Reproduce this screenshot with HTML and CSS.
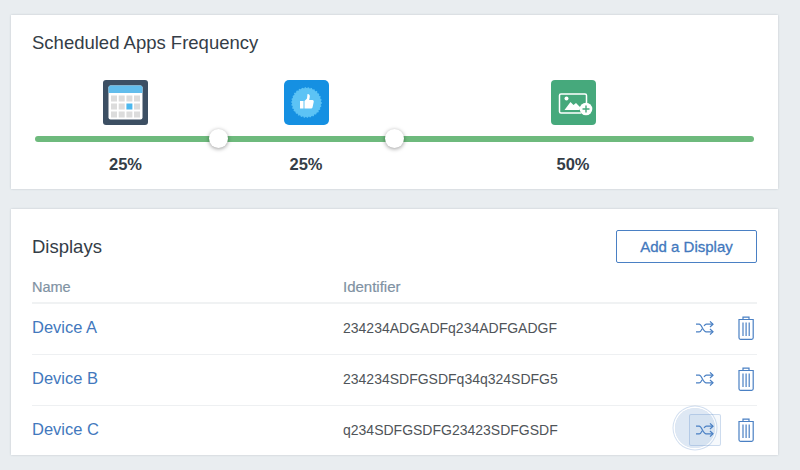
FILE: index.html
```html
<!DOCTYPE html>
<html lang="en">
<head>
<meta charset="utf-8">
<title>Scheduled Apps</title>
<link rel="stylesheet" href="styles.css">
</head>
<body>
<svg class="defs" width="0" height="0" aria-hidden="true">
  <symbol id="shuffle" viewBox="0 0 18 14">
    <g fill="none" stroke="currentColor" stroke-width="1.2">
      <path d="M0 3.200h3.200c2.800 0 3.600 7.600 7 7.600H17"/>
      <path d="M0 10.800h3.200c1.300 0 2.200-1.500 3-3.100M8 5c.7-1 1.400-1.800 2.400-1.800H17"/>
      <path d="M14 .4l3 2.800-3 2.800M14 8l3 2.800-3 2.800"/>
    </g>
  </symbol>
  <symbol id="trash" viewBox="0 0 16 24">
    <g fill="none" stroke="currentColor" stroke-width="1.200">
      <path d="M1 3.500h14.200v18.300a1.500 1.500 0 0 1-1.500 1.500H2.500A1.500 1.500 0 0 1 1 21.800z"/>
      <path d="M5 3.300V1.200h6v2.100"/>
      <path d="M5 6.500v13.500M8.100 6.500v13.500M11.200 6.500v13.500"/>
    </g>
  </symbol>
</svg>

<main class="page">
  <section class="card freq">
    <h2 class="title">Scheduled Apps Frequency</h2>
    <div class="slider">
      <div class="col col-a">
        <svg class="app" viewBox="0 0 45 45">
          <rect width="45" height="45" rx="3" fill="#3c4f63"/>
          <rect x="5.500" y="5.500" width="34" height="34" rx="2" fill="#fff"/>
          <path d="M5.500 13V7.500a2 2 0 0 1 2-2h30a2 2 0 0 1 2 2V13z" fill="#62bdec"/>
          <g fill="#dcdcdc">
            <rect x="8" y="15.500" width="6" height="6"/><rect x="15.700" y="15.500" width="6" height="6"/><rect x="23.400" y="15.500" width="6" height="6"/><rect x="31" y="15.500" width="6" height="6"/>
            <rect x="8" y="23.500" width="6" height="6"/><rect x="15.700" y="23.500" width="6" height="6"/><rect x="31" y="23.500" width="6" height="6"/>
            <rect x="8" y="31.500" width="6" height="6"/><rect x="15.700" y="31.500" width="6" height="6"/><rect x="23.400" y="31.500" width="6" height="6"/><rect x="31" y="31.500" width="6" height="6"/>
          </g>
          <rect x="23.400" y="23.500" width="6" height="6" fill="#4db8ee"/>
        </svg>
        <div class="track"></div>
        <div class="pct">25%</div>
      </div>
      <div class="col col-b">
        <svg class="app" viewBox="0 0 45 45">
          <rect width="45" height="45" rx="5" fill="#1590e2"/>
          <circle cx="22.500" cy="22.500" r="14.500" fill="#5cc3f5" stroke="#5cc3f5" stroke-width="1.500" stroke-dasharray="1.500 1.500"/>
          <path d="M16 21h3.500v7.500H16zM20.500 21l2.500-2.500.5-4.500c2 0 2.700 1.500 2.200 3.500l-.5 2.500h3.300c1 0 1.500 1 1.200 2l-1.200 5.500c-.2.700-.7 1-1.300 1h-6.700z" fill="#fff"/>
        </svg>
        <div class="track"></div>
        <div class="pct">25%</div>
      </div>
      <div class="col col-c">
        <svg class="app" viewBox="0 0 45 45">
          <rect width="45" height="45" rx="4" fill="#46a97c"/>
          <path d="M30 33H10a1.500 1.500 0 0 1-1.500-1.500V15.500A1.500 1.500 0 0 1 10 14h24a1.500 1.500 0 0 1 1.500 1.500V23" fill="none" stroke="#fff" stroke-width="1.500"/>
          <circle cx="15.500" cy="18.500" r="2" fill="#fff"/>
          <path d="M13.500 30l6-8 3 3 2.500-2 4.500 4.500-1 2.500z" fill="#fff"/>
          <circle cx="35" cy="29" r="6.300" fill="#fff"/>
          <path d="M35 25.500v7M31.500 29h7" stroke="#46a97c" stroke-width="1.400"/>
        </svg>
        <div class="track"></div>
        <div class="pct">50%</div>
      </div>
      <span class="thumb thumb-1"></span>
      <span class="thumb thumb-2"></span>
    </div>
  </section>

  <section class="card displays">
    <header class="head">
      <h2 class="title">Displays</h2>
      <button class="add" type="button">Add a Display</button>
    </header>
    <div class="row row-head">
      <span class="name">Name</span>
      <span class="ident">Identifier</span>
    </div>
    <div class="row">
      <a class="name link">Device A</a>
      <span class="ident val">234234ADGADFq234ADFGADGF</span>
      <span class="acts">
        <svg class="shuffle"><use href="#shuffle"/></svg>
        <svg class="trash"><use href="#trash"/></svg>
      </span>
    </div>
    <div class="row">
      <a class="name link">Device B</a>
      <span class="ident val">234234SDFGSDFq34q324SDFG5</span>
      <span class="acts">
        <svg class="shuffle"><use href="#shuffle"/></svg>
        <svg class="trash"><use href="#trash"/></svg>
      </span>
    </div>
    <div class="row">
      <a class="name link">Device C</a>
      <span class="ident val">q234SDFGSDFG23423SDFGSDF</span>
      <span class="acts">
        <span class="shuffle-wrap">
          <span class="ripple"></span>
          <span class="press"></span>
          <svg class="shuffle"><use href="#shuffle"/></svg>
        </span>
        <svg class="trash"><use href="#trash"/></svg>
      </span>
    </div>
  </section>
</main>
</body>
</html>
```

FILE: styles.css
```css
* { box-sizing: border-box; }
html, body { margin: 0; height: 100%; }
body {
  background: #e9edf0;
  font-family: "Liberation Sans", Arial, sans-serif;
  color: #343d47;
  overflow: hidden;
}
.defs { position: absolute; }
.page {
  width: 767px;
  margin-left: 11px;
  padding-top: 15px;
  display: flex;
  flex-direction: column;
  gap: 20px;
}
.card {
  background: #fff;
  box-shadow: 0 0 2px rgba(90, 105, 120, .28);
}
.title {
  margin: 0;
  font-size: 18.500px;
  font-weight: 400;
  line-height: 24px;
}
.freq { height: 174px; padding: 16px 24px 0 21px; }
.slider {
  position: relative;
  display: flex;
  width: 719px;
  margin: 25px 0 0 3px;
}
.col {
  display: flex;
  flex-direction: column;
  align-items: center;
}
.col-a { width: 183px; }
.col-b { width: 176px; }
.col-c { width: 360px; }
.app { display: block; width: 45px; height: 45px; }
.col-a .app { margin-right: 3px; }
.col-c .app { margin-right: 2px; }
.track { width: 100%; height: 6px; margin-top: 11px; background: #6eba7d; }
.col-a .track { border-radius: 3px 0 0 3px; }
.col-c .track { border-radius: 0 3px 3px 0; }
.pct {
  margin-top: 13px;
  font-size: 16.500px;
  font-weight: 700;
  line-height: 18px;
  color: #343d47;
}
.col-a .pct { margin-right: 2px; }
.col-c .pct { margin-right: 2px; }
.thumb {
  position: absolute;
  top: 49px;
  width: 19px;
  height: 19px;
  border-radius: 50%;
  background: #fff;
  box-shadow: 0 1px 4px rgba(0, 0, 0, .4);
}
.thumb-1 { left: 174px; }
.thumb-2 { left: 350px; }

.displays { height: 246px; padding: 21px 21px 0 21px; }
.head {
  display: flex;
  justify-content: space-between;
  align-items: center;
  height: 32px;
}
.head .title { padding-top: 2px; }
.add {
  width: 141px;
  height: 33px;
  padding: 0;
  background: #fff;
  border: 1px solid #4a80c4;
  border-radius: 2px;
  color: #4278bd;
  font: 400 15px "Liberation Sans", Arial, sans-serif;
  -webkit-text-stroke: .3px #4278bd;
}
.row {
  display: flex;
  align-items: center;
  height: 51px;
  padding-bottom: 2px;
  border-bottom: 1px solid #eef0f2;
}
.row:last-child { padding-bottom: 3px; border-bottom: 0; }
.row-head {
  height: 42px;
  padding: 16px 0 0;
  align-items: baseline;
  border-bottom: 2px solid #f0f2f3;
  font-size: 14.500px;
  font-weight: 400;
  color: #7f92a3;
  -webkit-text-stroke: .2px #7f92a3;
}
.name { width: 311px; }
.link { padding-bottom: 2px; font-size: 16.500px; color: #4278bd; }
.ident { flex: 1; }
.val { font-size: 14px; color: #4f5459; }
.row-head .ident { font-size: 15px; }
.acts {
  display: flex;
  align-items: center;
  gap: 24px;
  color: #4a80c4;
  padding-right: 3px;
}
.shuffle { display: block; width: 18px; height: 14px; }
.trash { display: block; width: 16px; height: 24px; }
.shuffle-wrap { position: relative; display: block; width: 18px; height: 14px; }
.ripple {
  position: absolute;
  left: -21px;
  top: -15px;
  width: 40px;
  height: 40px;
  border-radius: 50%;
  background: rgba(74, 128, 196, .18);
  box-shadow: 0 0 0 1.500px #fff, 0 0 0 2.500px rgba(74, 128, 196, .25);
}
.press {
  position: absolute;
  left: -7px;
  top: -9px;
  width: 32px;
  height: 32px;
  border: 1px solid rgba(74, 128, 196, .25);
  border-radius: 2px;
  background: rgba(74, 128, 196, .05);
}
.shuffle-wrap .shuffle { position: relative; }
```
